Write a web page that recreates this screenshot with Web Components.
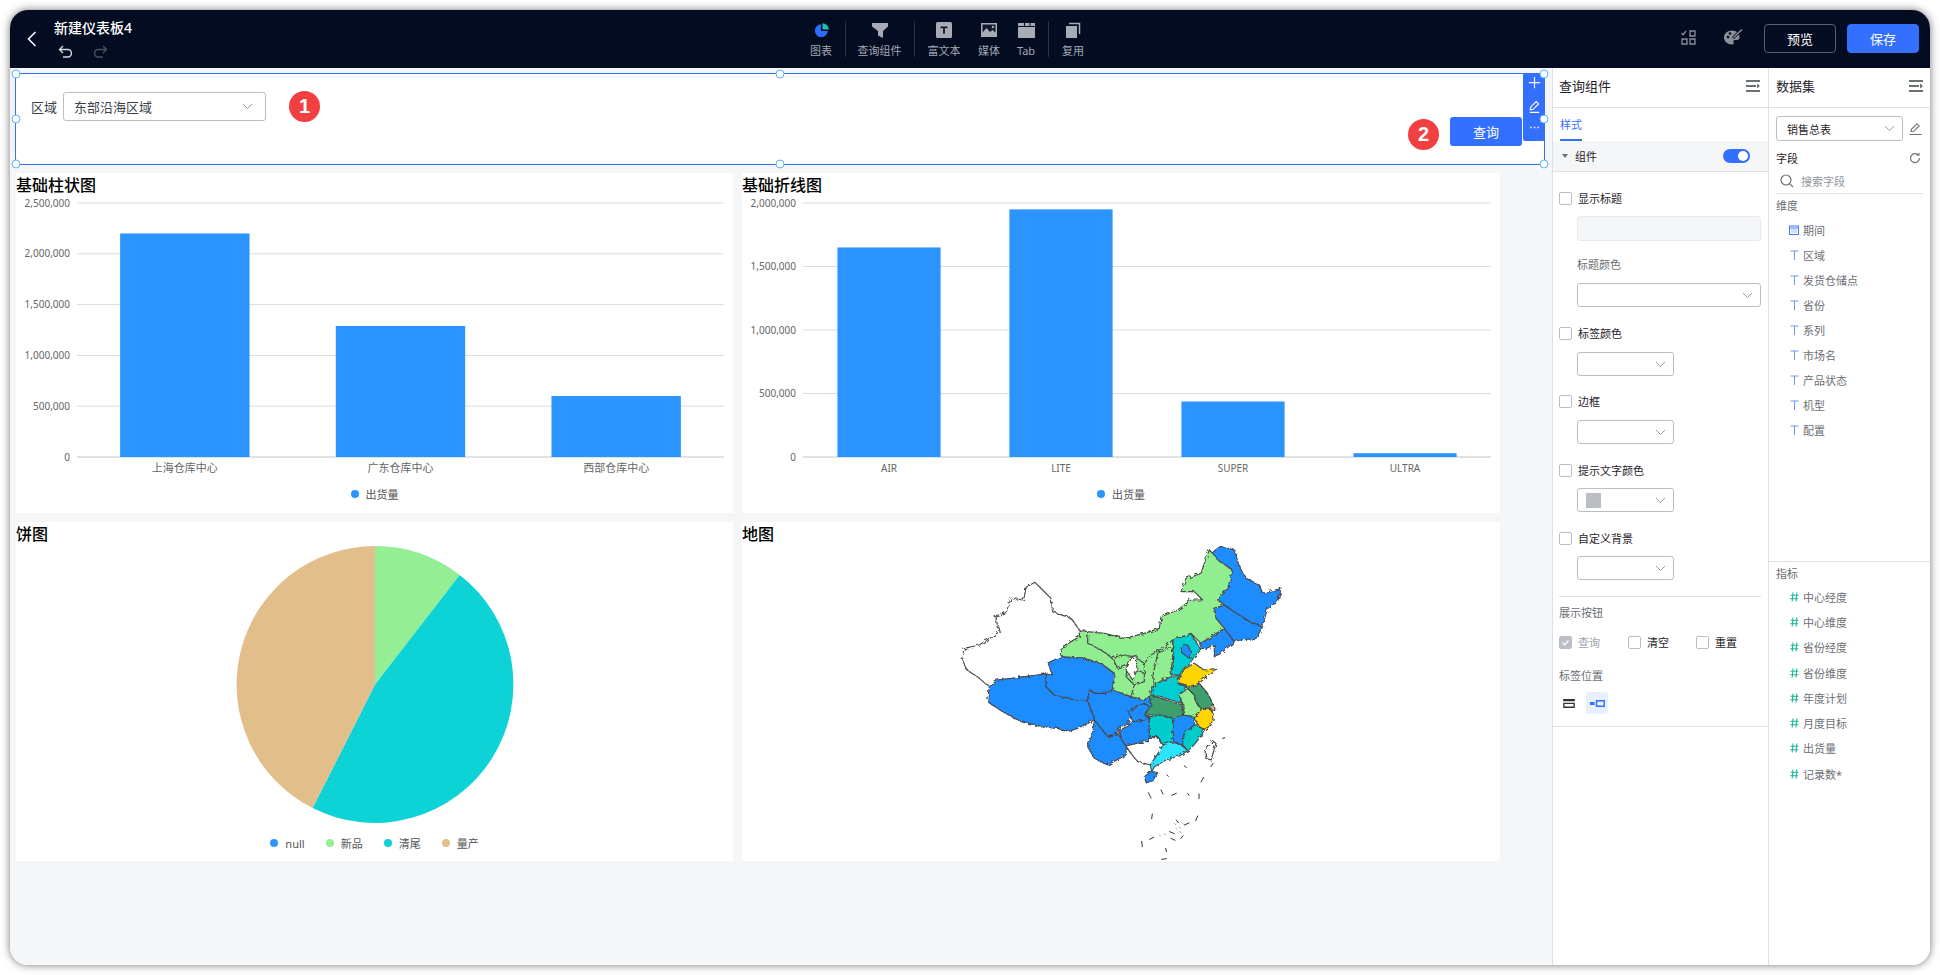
<!DOCTYPE html>
<html lang="zh">
<head>
<meta charset="utf-8">
<title>新建仪表板4</title>
<style>
  html, body { margin: 0; height: 100%; background: #fff; overflow: hidden; }
  body { font-family: "Noto Sans", "Noto Sans CJK SC", sans-serif; font-size: 11px; color: #1f2329; }
</style>
</head>
<body>
<app-window>
  <top-bar slot="top"></top-bar>
  <dash-canvas slot="main"></dash-canvas>
  <style-panel slot="main"></style-panel>
  <data-panel slot="main"></data-panel>
</app-window>

<script>
(function () {
  // every element here has the same shape: a fixed template in an open shadow root
  function define(name, html, init) {
    const template = document.createElement('template');
    template.innerHTML = html;
    customElements.define(name, class extends HTMLElement {
      constructor() {
        super();
        this.attachShadow({ mode: 'open' });
        this.shadowRoot.appendChild(template.content.cloneNode(true));
      }
      connectedCallback() {
        if (init) init(this, this.shadowRoot);
      }
    });
  }

  const chevron = '<svg width="11" height="7" viewBox="0 0 11 7"><path d="M1 1l4.500 4.500L10 1" fill="none" stroke="currentColor"/></svg>';
  const menuIcon = '<svg width="14" height="12" viewBox="0 0 14 12"><path d="M0 1h14M0 6h10M0 11h14" stroke="#6b7075" stroke-width="2"/><path d="M11 3.500L14 6l-3 2.500z" fill="#6b7075"/></svg>';

  define('app-window', `
    <style>
      :host { display: flex; flex-direction: column; position: absolute; left: 10px; top: 10px; width: 1920px; height: 955px;
        border-radius: 18px; overflow: hidden; background: #fff; box-shadow: 0 0 9px rgba(0,0,0,.55); }
      .main { display: flex; flex: 1; min-height: 0; }
    </style>
    <slot name="top"></slot>
    <div class="main"><slot name="main"></slot></div>
  `);

  define('tool-item', `
    <style>
      :host { display: flex; flex-direction: column; align-items: center; color: #a3a8b2; font-size: 11px; line-height: 14px; }
      .icon { height: 16px; margin-top: 12px; margin-bottom: 6px; display: flex; align-items: center; }
      ::slotted(svg) { display: block; }
    </style>
    <div class="icon"><slot name="icon"></slot></div>
    <slot></slot>
  `, (el) => { el.style.width = el.getAttribute('w') + 'px'; });

  define('top-bar', `
    <style>
      :host { display: flex; height: 58px; background: #040c21; color: #fff; flex: none; align-items: flex-start; }
      .back { width: 44px; padding: 21px 0 0 17px; box-sizing: border-box; flex: none; }
      .back svg { display: block; }
      .title { width: 743px; flex: none; padding-top: 9px; box-sizing: border-box; }
      .name { font-size: 14px; line-height: 17px; font-weight: 500; }
      .hist { display: flex; gap: 18px; margin: 8px 0 0 4px; }
      .tools { display: flex; flex: none; }
      .sep { width: 1px; height: 36px; background: #2b3243; margin-top: 11px; flex: none; margin-right: -1px; position: relative; }
      .right { margin-left: auto; display: flex; align-items: center; height: 57px; padding-right: 11px; }
      .right svg { display: block; margin-top: -3px; }
      button { width: 72px; height: 29px; border-radius: 4px; font: inherit; font-size: 13px; color: #fff; padding: 0; }
      .ghost { background: transparent; border: 1px solid #5a606d; margin: 0 11px 0 21px; }
      .solid { background: #3370ff; border: 1px solid #3370ff; }
      .pal { margin-left: 28px; }
    </style>
    <div class="back"><svg width="10" height="16" viewBox="0 0 10 16"><path d="M8.500 1L1.500 8l7 7" fill="none" stroke="#fff" stroke-width="1.500"/></svg></div>
    <div class="title">
      <div class="name">新建仪表板4</div>
      <div class="hist">
        <svg width="16" height="16" viewBox="0 0 16 16"><path d="M5 2L1.500 5.500 5 9M1.500 5.500h8.200a3.600 3.600 0 0 1 0 7.500H5" fill="none" stroke="#d6d8dc" stroke-width="1.400"/></svg>
        <svg width="16" height="16" viewBox="0 0 16 16"><path d="M11 2l3.500 3.500L11 9M14.500 5.500H6.300a3.600 3.600 0 0 0 0 7.500H11" fill="none" stroke="#4a4f5a" stroke-width="1.400"/></svg>
      </div>
    </div>
    <div class="tools">
      <tool-item w="48"><svg slot="icon" width="15" height="15" viewBox="0 0 15 15"><path d="M7 1.200A6.500 6.500 0 1 0 13.800 8H7z" fill="#2f6bff"/><path d="M8.500 0.200A6.500 6.500 0 0 1 14.800 6.500H8.500z" fill="#14c9a8"/></svg>图表</tool-item>
      <div class="sep"></div>
      <tool-item w="69"><svg slot="icon" width="16" height="15" viewBox="0 0 16 15"><path d="M0 0h16v3.500l-5 4.500v7l-5-2.500V8L0 3.500z" fill="#a7abb3"/></svg>查询组件</tool-item>
      <div class="sep"></div>
      <tool-item w="60"><svg slot="icon" width="16" height="16" viewBox="0 0 16 16"><rect width="16" height="16" rx="1.500" fill="#a7abb3"/><path d="M4.500 4.500h7v1.800H8.900v5.500H7.100V6.300H4.500z" fill="#141a2b"/></svg>富文本</tool-item>
      <tool-item w="30"><svg slot="icon" width="16" height="14" viewBox="0 0 16 14"><path d="M0 0h16v14H0z" fill="#a7abb3"/><path d="M1.500 1.500h13v8l-3-2.500-2.500 2-3.500-4-4 4.500z" fill="#141a2b"/><circle cx="12" cy="4" r="1.200" fill="#a7abb3"/></svg>媒体</tool-item>
      <tool-item w="44"><svg slot="icon" width="17" height="15" viewBox="0 0 17 15"><path d="M0 0h6v3H0zM7 0h4.500v3H7zM12.500 0H17v3h-4.500zM0 4h17v11H0z" fill="#a7abb3"/></svg>Tab</tool-item>
      <div class="sep"></div>
      <tool-item w="50"><svg slot="icon" width="15" height="16" viewBox="0 0 15 16"><path d="M0 4h11v12H0z" fill="#a7abb3"/><path d="M3 1.500h10.500V12" fill="none" stroke="#a7abb3" stroke-width="1.500"/></svg>复用</tool-item>
    </div>
    <div class="right">
      <svg width="15" height="15" viewBox="0 0 15 15"><path d="M.5 3l1.500 1.700L5 1" fill="none" stroke="#8a8f99" stroke-width="1.200"/><path d="M9 1h5v5H9zM1 9h5v5H1zM9 9h5v5H9z" fill="none" stroke="#8a8f99" stroke-width="1.300"/></svg>
      <svg class="pal" width="19" height="16" viewBox="0 0 19 16"><path d="M8 1.500C3.500 1.500 0 4.500 0 8.500S3.500 15.500 8 15.500c2 0 2-1.500 1.500-2.500s0-2 1.500-2h2c1.500 0 2.500-1 2.500-3 0-3.500-3-6.500-7.500-6.500z" fill="#8a8f99"/><circle cx="4" cy="8" r="1.300" fill="#040c21"/><circle cx="6" cy="4.500" r="1.300" fill="#040c21"/><path d="M9 9L17.500 .8" stroke="#040c21" stroke-width="3"/><path d="M9.500 8.500L18 .5" stroke="#8a8f99" stroke-width="1.500"/></svg>
      <button class="ghost">预览</button>
      <button class="solid">保存</button>
    </div>
  `);

  define('sel-box', `
    <style>
      :host { display: flex; align-items: center; box-sizing: border-box; height: 24px; border: 1px solid #bbbec4; border-radius: 3px; background: #fff;
        color: #3a3f4a; font-size: 11px; padding: 0 7px 0 8px; }
      .txt { flex: 1; white-space: nowrap; display: flex; align-items: center; }
      .arr { display: flex; color: #9a9ea6; }
    </style>
    <div class="txt"><slot></slot></div>
    <div class="arr">${chevron}</div>
  `);

  define('query-box', `
    <style>
      :host { display: flex; justify-content: space-between; position: relative; box-sizing: border-box; height: 92px;
        margin: 5px 0 0 5px; width: 1530px; border: 1px solid #3370ff; background: #fff; flex: none; }
      .filter { display: flex; align-items: center; height: 29px; margin: 17.500px 0 0 15px; font-size: 13px; color: #3a3f4a; gap: 6px; }
      sel-box { width: 203px; height: 29px; font-size: 13px; padding: 0 12px 0 10px; }
      button { width: 72px; height: 29px; margin: 43px 22px 0 0; background: #3370ff; border: 0; border-radius: 3px; color: #fff; font: inherit; font-size: 13px; padding: 0; }
      .h { position: absolute; width: 7px; height: 7px; border: 1px solid #5ab5ff; border-radius: 50%; background: #fff; transform: translate(-50%, -50%); }
      .bar { position: absolute; right: -1px; top: -1px; width: 22px; height: 68px; background: #3370ff; border-radius: 2px; display: flex; flex-direction: column; align-items: center; padding-top: 3px; box-sizing: border-box; }
      .bar svg { display: block; height: 23px; }
      .badge { position: absolute; width: 31px; height: 31px; border-radius: 50%; background: #f23f41; color: #fff; font-size: 20px; font-weight: 700; line-height: 31px; text-align: center; font-family: "Liberation Sans", sans-serif; }
    </style>
    <div class="filter">区域<sel-box>东部沿海区域</sel-box></div>
    <button>查询</button>
    <span class="badge" style="left:273px;top:17px">1</span>
    <span class="badge" style="left:1392px;top:45px">2</span>
    <div class="bar">
      <svg width="13" height="23" viewBox="0 0 13 23"><path d="M6.500 1v12M.5 7h12" stroke="#fff" stroke-width="1.200"/></svg>
      <svg width="13" height="23" viewBox="0 0 13 23"><path d="M2 12.500l.6-3L8.300 3.800l2.500 2.500-5.700 5.700zM1.500 15.200h10" fill="none" stroke="#fff" stroke-width="1.200"/></svg>
      <svg width="13" height="23" viewBox="0 0 13 23"><path d="M2 9h1.500M5.800 9h1.500M9.600 9h1.500" stroke="#fff" stroke-width="1.500"/></svg>
    </div>
    <span class="h" style="left:0;top:0"></span><span class="h" style="left:0;top:45px"></span><span class="h" style="left:0;top:100%"></span>
    <span class="h" style="left:50%;top:0"></span><span class="h" style="left:50%;top:100%"></span>
    <span class="h" style="left:100%;top:0"></span><span class="h" style="left:100%;top:45px"></span><span class="h" style="left:100%;top:100%"></span>
  `);

  define('chart-card', `
    <style>
      :host { display: block; background: #fff; overflow: hidden; }
      .t { font-size: 16px; line-height: 24px; height: 24px; color: #000; font-weight: 500; white-space: nowrap; }
    </style>
    <div class="t"></div>
    <slot></slot>
  `, (el, root) => { root.querySelector('.t').textContent = el.getAttribute('title'); });

  define('chart-legend', `
    <style>
      :host { display: flex; justify-content: center; align-items: center; gap: 21px; height: 24px; font-size: 11px; color: #555; }
      .i { display: flex; align-items: center; gap: 7px; }
      .d { width: 8px; height: 8px; border-radius: 50%; }
    </style>
    <div id="l" style="display:contents"></div>
  `, (el, root) => {
    root.getElementById('l').innerHTML = el.getAttribute('items').split(',').map((s) => {
      const [txt, col] = s.split(':');
      return `<div class="i"><span class="d" style="background:${col}"></span>${txt}</div>`;
    }).join('');
  });

  define('bar-chart', `
    <style>
      :host { display: block; }
      svg { display: block; overflow: visible; }
      text { font-size: 10px; fill: #666; }
    </style>
    <svg height="285"></svg>
  `, (el, root) => {
    const svg = root.querySelector('svg');
    const left = +el.getAttribute('left'), right = +el.getAttribute('right');
    const top = +el.getAttribute('top'), base = 260;
    const max = +el.getAttribute('max');
    const step = +el.getAttribute('step');
    const data = JSON.parse(el.getAttribute('data'));
    svg.setAttribute('width', el.getAttribute('w'));
    const scale = (base - top) / max;
    let out = '';
    for (let v = 0; v <= max; v += step) {
      const y = base - v * scale;
      out += `<line x1="${left}" x2="${right}" y1="${y}" y2="${y}" stroke="${v ? '#dcdcdc' : '#c4c6ca'}"/>`;
      out += `<text x="${left - 7}" y="${y + 3.500}" text-anchor="end">${v.toLocaleString('en-US')}</text>`;
    }
    const slot = (right - left) / data.length;
    data.forEach((d, i) => {
      const w = slot * 0.6, x = left + slot * i + slot * 0.2, h = d[1] * scale;
      out += `<rect x="${x}" y="${base - h}" width="${w}" height="${h}" fill="#2b94ff"/>`;
      out += `<text x="${x + w / 2}" y="${base + 15}" text-anchor="middle" style="font-size:${d[2] || 11}px">${d[0]}</text>`;
    });
    svg.innerHTML = out;
  });

  define('pie-chart', `
    <style>:host { display: block; } svg { display: block; margin: 0 auto; }</style>
    <svg width="717" height="285" viewBox="0 0 717 285">
      <path d="M359 138.500V0A138.500 138.500 0 0 1 443.700 28.900z" fill="#94ee94"/>
      <path d="M359 138.500L443.700 28.900A138.500 138.500 0 0 1 296.600 262.100z" fill="#0dd3d6"/>
      <path d="M359 138.500L296.600 262.100A138.500 138.500 0 0 1 359 0z" fill="#e2be8b"/>
    </svg>
  `);

  // outline is traced from the reference, in 3x crop coordinates
  const BLUE = '#1e8cff', GREEN = '#90ee90', TEAL = '#00cdd2', SEA = '#3c9e6e', GOLD = '#ffd500';
  const provinces = [
    ['#fff', 'M445 300L420 265L365 245L360 205L335 180L312 157L285 172L278 210L240 205L225 248L192 258L205 305L145 345L100 355L92 385L108 420L145 445L175 470L200 450L285 440L345 432L365 435L350 400L390 380L395 350L445 320Z'],
    [BLUE, 'M175 470L200 450L285 440L345 432L345 470L370 495L430 510L470 510L490 570L440 595L410 605L380 595L330 590L270 575L215 545L170 515Z'],
    [BLUE, 'M345 432L365 435L350 400L390 380L460 385L510 400L550 430L545 480L525 490L490 490L475 480L470 510L430 510L370 495L345 470Z'],
    [BLUE, 'M470 510L475 480L490 490L525 490L545 480L600 500L640 510L655 495L660 530L640 555L600 560L590 580L565 590L560 610L530 620L490 570Z'],
    [BLUE, 'M490 570L530 620L560 610L570 625L585 648L590 660L575 680L530 705L490 685L470 650L485 610Z'],
    [BLUE, 'M563 600L590 590L605 575L640 570L655 560L655 620L680 620L640 635L585 648L570 625Z'],
    [BLUE, 'M590 545L640 520L655 530L640 555L655 560L640 570L605 575L600 560Z'],
    ['#fff', 'M585 648L640 635L680 620L695 645L685 665L658 705L620 695L600 670Z'],
    ['#2ce5ff', 'M695 645L710 635L725 635L755 648L770 662L745 678L705 690L670 710L662 725L658 705L685 665Z'],
    [BLUE, 'M640 740L660 725L680 728L665 753L645 757Z'],
    ['#00cccc', 'M655 560L690 555L725 565L725 635L695 645L680 620L655 620Z'],
    [BLUE, 'M725 565L758 555L790 560L790 585L760 610L755 645L725 635Z'],
    ['#00cccc', 'M790 585L805 590L820 600L805 625L780 655L770 662L755 645L760 610Z'],
    [GOLD, 'M812 535L835 535L850 555L840 585L820 600L805 590L790 565Z'],
    [SEA, 'M655 495L690 505L720 515L755 525L758 555L725 565L690 555L640 555L660 530Z'],
    [TEAL, 'M670 465L720 440L745 435L740 460L765 470L745 495L755 520L720 510L690 500L655 495Z'],
    [GREEN, 'M745 495L770 475L790 495L800 525L812 535L790 560L758 555L755 520Z'],
    [SEA, 'M775 470L805 460L830 490L850 530L835 535L812 535L800 525L790 495L770 475Z'],
    ['#e2be8b', 'M838 526L848 524L852 540L842 545Z'],
    [GOLD, 'M740 460L755 420L790 400L820 420L858 415L830 435L805 460L775 470Z'],
    [TEAL, 'M725 330L780 310L810 360L790 380L780 395L755 420L745 435L720 435L725 380Z'],
    [BLUE, 'M750 350L770 345L780 365L775 385L755 370Z'],
    [BLUE, 'M810 340L880 295L910 335L870 370L850 380L850 345L820 358L808 360Z'],
    [BLUE, 'M850 235L880 225L925 255L965 280L995 290L975 325L930 330L910 335L880 295L855 265Z'],
    [BLUE, 'M840 70L870 48L910 60L925 110L945 145L985 165L995 190L1050 175L1040 215L1010 235L995 285L965 280L925 255L880 225L860 210L890 175L905 120L860 90Z'],
    [GREEN, 'M445 300L470 305L520 310L580 325L640 310L685 295L690 260L740 240L780 210L815 210L790 185L750 185L765 145L810 130L825 85L835 60L850 75L860 90L905 120L890 175L860 210L880 225L850 235L855 265L880 295L810 340L780 310L725 330L725 380L720 435L670 465L655 495L640 510L600 500L545 480L550 430L510 400L460 385L390 380L395 350L445 320Z'],
    ['none', 'M680 370L665 440L670 465M640 400L640 455L610 465L600 500M470 305L470 340L510 360L545 385L560 415L590 400M640 400L660 375L700 352L725 330M680 370L725 350M610 420L640 430M610 465L585 440L590 400M540 385L570 375L610 380L640 400'],
    ['#fff', 'M600 385L615 375L618 420L605 450L585 420Z'],
    ['#fff', 'M822 665L845 632L855 640L840 690L825 685Z']
  ];

  define('china-map', `
    <style>:host { display: block; } svg { display: block; margin: 0 auto; }</style>
    <svg width="380" height="315" viewBox="0 48 1140 945">
      <filter id="rough" filterUnits="userSpaceOnUse" x="0" y="0" width="1140" height="1020">
        <feTurbulence type="fractalNoise" baseFrequency="0.09" numOctaves="2" seed="4"/>
        <feDisplacementMap in="SourceGraphic" scale="14"/>
      </filter>
      <g id="p" stroke="#4a4a4a" stroke-width="3.500" stroke-linejoin="round" filter="url(#rough)"></g>
      <g fill="none" stroke="#333" stroke-width="3" stroke-linecap="round">
        <path d="M875 625l6-2M846 700l-6 10M760 708l6 4M708 735l4 4M818 742l-8 14M652 788l8 16M690 780l6 12M722 796l14-6M770 790l4 6M804 792v14M664 852l-2 14M800 858l-6 14M632 934l2 16M656 928l12-6M736 870l6 8M760 885l14-6M716 905l14 6M720 925l12 6M750 925l6-8M704 955l2 10M692 988l14-2"/>
        <path d="M730 880l4 4M745 890l4 4M700 912l4 2M685 915l4 2M745 905l6 2M735 895l3 3M755 880l3 3" stroke="#999" stroke-width="2.500"/>
      </g>
    </svg>
  `, (el, root) => {
    root.getElementById('p').innerHTML = provinces.map((p) => `<path fill="${p[0]}" d="${p[1]}"/>`).join('');
  });

  define('dash-canvas', `
    <style>
      :host { display: flex; flex-direction: column; width: 1542px; flex: none; background: #f5f6f8; min-width: 0; }
      .grid { display: grid; grid-template-columns: 717px 758px; grid-template-rows: 340px 339px; gap: 9px; margin: 8px 0 0 6px; }
    </style>
    <query-box></query-box>
    <div class="grid">
      <chart-card title="基础柱状图">
        <bar-chart w="717" left="61" right="708" top="6" max="2500000" step="500000"
          data='[["上海仓库中心",2200000],["广东仓库中心",1290000],["西部仓库中心",600000]]'></bar-chart>
        <chart-legend items="出货量:#2b94ff"></chart-legend>
      </chart-card>
      <chart-card title="基础折线图">
        <bar-chart w="758" left="61" right="749" top="6" max="2000000" step="500000"
          data='[["AIR",1650000,10],["LITE",1950000,10],["SUPER",437000,10],["ULTRA",30000,10]]'></bar-chart>
        <chart-legend items="出货量:#2b94ff"></chart-legend>
      </chart-card>
      <chart-card title="饼图">
        <pie-chart></pie-chart>
        <chart-legend items="null:#2b94ff,新品:#94ee94,清尾:#0dd3d6,量产:#e2be8b"></chart-legend>
      </chart-card>
      <chart-card title="地图">
        <china-map></china-map>
      </chart-card>
    </div>
  `);

  define('check-row', `
    <style>
      :host { display: flex; align-items: center; height: 18px; gap: 6px; font-size: 11px; color: #1f2329; white-space: nowrap; }
      .b { width: 13px; height: 13px; box-sizing: border-box; border: 1px solid #bbbec4; border-radius: 2px; background: #fff; flex: none; }
      :host([on]) { color: #a0a4ab; }
      :host([on]) .b { background: #bbbec4; display: flex; }
      :host(:not([on])) .c { display: none; }
    </style>
    <div class="b"><svg class="c" width="11" height="11" viewBox="0 0 11 11"><path d="M2.500 5.500l2.300 2.300 3.700-4.300" fill="none" stroke="#fff" stroke-width="1.300"/></svg></div>
    <slot></slot>
  `);

  define('style-panel', `
    <style>
      :host { display: block; width: 216px; flex: none; box-sizing: border-box; border-left: 1px solid #dfe0e3; background: #fff; position: relative; }
      .head { height: 40px; box-sizing: border-box; border-bottom: 1px solid #dfe0e3; display: flex; justify-content: space-between; align-items: center; padding: 0 8px 4px 6px; font-size: 13px; }
      .head svg { display: block; }
      .tabs { height: 33px; box-sizing: border-box; padding-left: 7px; }
      .tab { display: inline-block; height: 33px; line-height: 33px; box-sizing: border-box; border-bottom: 2.500px solid #3370ff; color: #3370ff; font-size: 11px; }
      .sec { height: 31px; box-sizing: border-box; background: #f5f6f8; border-bottom: 1px solid #dfe0e3; display: flex; align-items: center; padding: 0 18px 0 9px; font-size: 11px; }
      .tri { width: 0; height: 0; border: 3.500px solid transparent; border-top: 4.500px solid #6b7075; border-bottom: 0; margin-right: 7px; }
      .sw { margin-left: auto; width: 27px; height: 14px; border-radius: 7px; background: #3370ff; position: relative; }
      .sw::after { content: ""; position: absolute; right: 2px; top: 2px; width: 10px; height: 10px; border-radius: 50%; background: #fff; }
      .body { padding: 17px 7px 0 6px; }
      .in { margin-left: 18px; margin-top: 9px; height: 25px; width: 184px; box-sizing: border-box; }
      .empty { background: #f5f6f9; border: 1px solid #e8eaee; border-radius: 3px; }
      sel-box.w { margin-left: 18px; margin-top: 9px; width: 184px; color: #777; }
      sel-box.s { margin-left: 18px; margin-top: 9px; width: 97px; }
      .lab { height: 18px; line-height: 18px; color: #6b7075; font-size: 11px; }
      .swatch { width: 15px; height: 15px; background: #bbbec4; display: block; }
      .m15 { margin-top: 15px; margin-left: 18px; }
      .m17 { margin-top: 17px; }
      hr { border: 0; border-top: 1px solid #dfe0e3; margin: 16px 0 0; }
      .m8 { margin-top: 7px; }
      .btns { display: flex; margin-top: 11px; }
      .btns check-row:nth-child(1) { width: 69px; }
      .btns check-row:nth-child(2) { width: 68px; }
      .m16 { margin-top: 16px; }
      .pos { display: flex; margin: 7px 0 0 -1px; gap: 6px; align-items: center; }
      .p { width: 22px; height: 22px; display: flex; align-items: center; justify-content: center; border-radius: 3px; }
      .p.on { background: #e8efff; }
      .p svg { display: block; }
      .end { border-top: 1px solid #dfe0e3; margin: 12px -7px 0 -6px; }
    </style>
    <div class="head">查询组件${menuIcon}</div>
    <div class="tabs"><span class="tab">样式</span></div>
    <div class="sec"><span class="tri"></span>组件<span class="sw"></span></div>
    <div class="body">
      <check-row>显示标题</check-row>
      <div class="in empty"></div>
      <div class="lab m15">标题颜色</div>
      <sel-box class="w"></sel-box>
      <check-row class="m17">标签颜色</check-row>
      <sel-box class="s" style="margin-top:10px"></sel-box>
      <check-row class="m16">边框</check-row>
      <sel-box class="s" style="margin-top:10px"></sel-box>
      <check-row class="m17">提示文字颜色</check-row>
      <sel-box class="s"><span class="swatch"></span></sel-box>
      <check-row class="m17">自定义背景</check-row>
      <sel-box class="s"></sel-box>
      <hr>
      <div class="lab m8">展示按钮</div>
      <div class="btns"><check-row on>查询</check-row><check-row>清空</check-row><check-row>重置</check-row></div>
      <div class="lab m16">标签位置</div>
      <div class="pos">
        <div class="p"><svg width="12" height="9" viewBox="0 0 13 10"><path d="M0 0h13v2.500H0z" fill="#333"/><path d="M.8 4.800h11.400v4.400H.8z" fill="none" stroke="#333" stroke-width="1.500"/></svg></div>
        <div class="p on"><svg width="15" height="7" viewBox="0 0 15 7"><path d="M0 2h4.500v3H0z" fill="#3370ff"/><path d="M6.500.8h7.700v5.400H6.500z" fill="none" stroke="#3370ff" stroke-width="1.500"/></svg></div>
      </div>
      <div class="end"></div>
    </div>
  `);

  define('field-item', `
    <style>
      :host { display: flex; align-items: center; height: 25.100px; padding-left: 20px; gap: 4px; color: #6b7075; font-size: 11px; white-space: nowrap; }
      .i { width: 10px; height: 12px; display: flex; align-items: center; justify-content: center; }
      svg { display: none; }
      :host([type="t"]) .t, :host([type="d"]) .d, :host([type="n"]) .n { display: block; }
    </style>
    <div class="i">
      <svg class="t" width="9" height="10" viewBox="0 0 9 10"><path d="M.5 1h8M4.500 1v9" stroke="#5a8ff5" stroke-width=".9"/></svg>
      <svg class="d" width="10" height="10" viewBox="0 0 10 10"><rect x=".5" y="1" width="9" height="8.500" fill="none" stroke="#3f7bf6"/><path d="M.5 3h9" stroke="#3f7bf6"/><path d="M2.500 5h5M2.500 7h5" stroke="#3f7bf6" stroke-dasharray="1 1"/></svg>
      <svg class="n" width="9" height="10" viewBox="0 0 9 10"><path d="M3 .5L2.200 9.500M6.800 .5L6 9.500M.5 3.200h8M.2 6.800h8" stroke="#18b99a" stroke-width="1.100"/></svg>
    </div>
    <slot></slot>
  `);

  define('data-panel', `
    <style>
      :host { display: block; width: 162px; flex: none; box-sizing: border-box; border-left: 1px solid #dfe0e3; background: #fff; }
      .head { height: 40px; box-sizing: border-box; border-bottom: 1px solid #dfe0e3; display: flex; justify-content: space-between; align-items: center; padding: 0 7px 4px 7px; font-size: 13px; }
      .head svg { display: block; }
      .top { height: 453px; box-sizing: border-box; padding: 8px 7px 0 7px; }
      .sel { display: flex; align-items: center; justify-content: space-between; }
      .sel sel-box { width: 127px; height: 25px; padding-left: 10px; color: #1f2329; }
      .row { display: flex; justify-content: space-between; align-items: center; height: 18px; margin-top: 8px; padding-right: 2px; }
      .search { display: flex; align-items: center; gap: 7px; height: 25px; border-bottom: 1px solid #dfe0e3; color: #8f959e; padding-left: 4px; margin-top: 1px; padding-bottom: 0; }
      .lab { height: 23px; line-height: 24px; color: #6b7075; font-size: 11px; }
      .list { margin: 0 -7px; }
      .bot { border-top: 1px solid #dfe0e3; padding: 0 7px; }
      .bot .lab { height: 22px; }
      .bot field-item { height: 25.300px; }
      svg { display: block; }
    </style>
    <div class="head">数据集${menuIcon}</div>
    <div class="top">
      <div class="sel">
        <sel-box>销售总表</sel-box>
        <svg width="13" height="14" viewBox="0 0 13 14" style="margin-right:1px"><path d="M2 9.500l.6-2.500L8 1.700l2.200 2.200L4.800 9.300zM.5 12.500h12" fill="none" stroke="#6b7075" stroke-width="1.100"/></svg>
      </div>
      <div class="row">字段
        <svg width="12" height="12" viewBox="0 0 12 12"><path d="M10.500 6A4.500 4.500 0 1 1 9 2.700" fill="none" stroke="#6b7075" stroke-width="1.200"/><path d="M10.500 .5v3.300H7.300z" fill="#6b7075"/></svg>
      </div>
      <div class="search">
        <svg width="14" height="14" viewBox="0 0 14 14"><circle cx="6" cy="6" r="5" fill="none" stroke="#6b7075" stroke-width="1.200"/><path d="M9.800 9.800l3.200 3.200" stroke="#6b7075" stroke-width="1.200"/></svg>
        搜索字段
      </div>
      <div class="lab">维度</div>
      <div class="list">
        <field-item type="d">期间</field-item>
        <field-item type="t">区域</field-item>
        <field-item type="t">发货仓储点</field-item>
        <field-item type="t">省份</field-item>
        <field-item type="t">系列</field-item>
        <field-item type="t">市场名</field-item>
        <field-item type="t">产品状态</field-item>
        <field-item type="t">机型</field-item>
        <field-item type="t">配置</field-item>
      </div>
    </div>
    <div class="bot">
      <div class="lab">指标</div>
      <div class="list">
        <field-item type="n">中心经度</field-item>
        <field-item type="n">中心维度</field-item>
        <field-item type="n">省份经度</field-item>
        <field-item type="n">省份维度</field-item>
        <field-item type="n">年度计划</field-item>
        <field-item type="n">月度目标</field-item>
        <field-item type="n">出货量</field-item>
        <field-item type="n">记录数*</field-item>
      </div>
    </div>
  `);
})();
</script>
</body>
</html>
